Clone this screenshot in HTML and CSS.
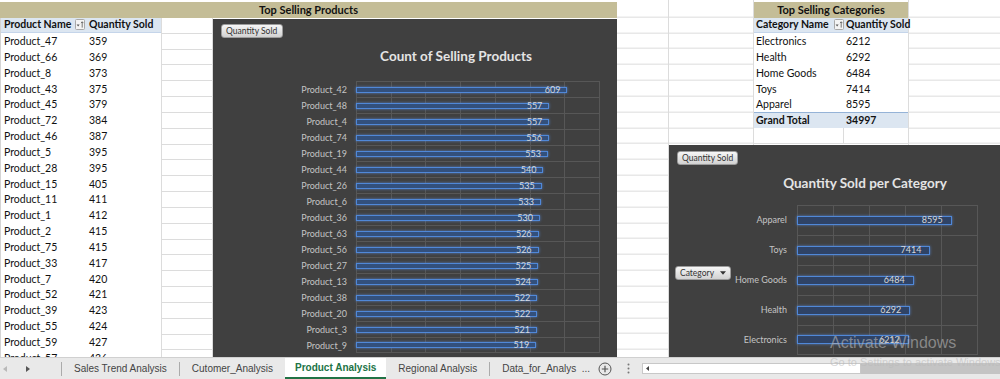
FILE: index.html
```html
<!DOCTYPE html>
<html lang="en">
<head>
<meta charset="utf-8">
<title>Product Analysis</title>
<link rel="stylesheet" href="styles.css">
</head>
<body>
<div class="sheet">
  <div class="group-left">
    <div class="band">Top Selling Products</div>
    <div class="left-body">
      <div class="pivot pivot-products">
        <div class="pv-row pv-head">
          <div class="c ca">Product Name
            <svg class="filter" viewBox="0 0 10 11" width="10" height="11"><rect x="0.5" y="0.5" width="9" height="10" rx="1" fill="#f4f4f4" stroke="#a9a9a9"/><path d="M1.6 5.6h3l-1.5 1.8z" fill="#555"/><path d="M7.2 8.6V2.8M6 4.1 7.2 2.8l1.2 1.3" stroke="#555" stroke-width="0.8" fill="none"/></svg>
          </div>
          <div class="c cb">Quantity Sold</div>
        </div>
        <div class="pv-row"><div class="c ca">Product_47</div><div class="c cb">359</div></div>
        <div class="pv-row"><div class="c ca">Product_66</div><div class="c cb">369</div></div>
        <div class="pv-row"><div class="c ca">Product_8</div><div class="c cb">373</div></div>
        <div class="pv-row"><div class="c ca">Product_43</div><div class="c cb">375</div></div>
        <div class="pv-row"><div class="c ca">Product_45</div><div class="c cb">379</div></div>
        <div class="pv-row"><div class="c ca">Product_72</div><div class="c cb">384</div></div>
        <div class="pv-row"><div class="c ca">Product_46</div><div class="c cb">387</div></div>
        <div class="pv-row"><div class="c ca">Product_5</div><div class="c cb">395</div></div>
        <div class="pv-row"><div class="c ca">Product_28</div><div class="c cb">395</div></div>
        <div class="pv-row"><div class="c ca">Product_15</div><div class="c cb">405</div></div>
        <div class="pv-row"><div class="c ca">Product_11</div><div class="c cb">411</div></div>
        <div class="pv-row"><div class="c ca">Product_1</div><div class="c cb">412</div></div>
        <div class="pv-row"><div class="c ca">Product_2</div><div class="c cb">415</div></div>
        <div class="pv-row"><div class="c ca">Product_75</div><div class="c cb">415</div></div>
        <div class="pv-row"><div class="c ca">Product_33</div><div class="c cb">417</div></div>
        <div class="pv-row"><div class="c ca">Product_7</div><div class="c cb">420</div></div>
        <div class="pv-row"><div class="c ca">Product_52</div><div class="c cb">421</div></div>
        <div class="pv-row"><div class="c ca">Product_39</div><div class="c cb">423</div></div>
        <div class="pv-row"><div class="c ca">Product_55</div><div class="c cb">424</div></div>
        <div class="pv-row"><div class="c ca">Product_59</div><div class="c cb">427</div></div>
        <div class="pv-row"><div class="c ca">Product_57</div><div class="c cb">436</div></div>
      </div>
      <div class="blank col-c"></div>
      <div class="chart chart-products">
        <div class="field-btn">Quantity Sold</div>
        <div class="chart-title">Count of Selling Products</div>
        <div class="plot">
          <div class="plot-label">Product_42</div><div class="track"><div class="bar" style="width:87.00%"><span>609</span></div></div>
          <div class="plot-label">Product_48</div><div class="track"><div class="bar" style="width:79.57%"><span>557</span></div></div>
          <div class="plot-label">Product_4</div><div class="track"><div class="bar" style="width:79.57%"><span>557</span></div></div>
          <div class="plot-label">Product_74</div><div class="track"><div class="bar" style="width:79.43%"><span>556</span></div></div>
          <div class="plot-label">Product_19</div><div class="track"><div class="bar" style="width:79.00%"><span>553</span></div></div>
          <div class="plot-label">Product_44</div><div class="track"><div class="bar" style="width:77.14%"><span>540</span></div></div>
          <div class="plot-label">Product_26</div><div class="track"><div class="bar" style="width:76.43%"><span>535</span></div></div>
          <div class="plot-label">Product_6</div><div class="track"><div class="bar" style="width:76.14%"><span>533</span></div></div>
          <div class="plot-label">Product_36</div><div class="track"><div class="bar" style="width:75.71%"><span>530</span></div></div>
          <div class="plot-label">Product_63</div><div class="track"><div class="bar" style="width:75.14%"><span>526</span></div></div>
          <div class="plot-label">Product_56</div><div class="track"><div class="bar" style="width:75.14%"><span>526</span></div></div>
          <div class="plot-label">Product_27</div><div class="track"><div class="bar" style="width:75.00%"><span>525</span></div></div>
          <div class="plot-label">Product_13</div><div class="track"><div class="bar" style="width:74.86%"><span>524</span></div></div>
          <div class="plot-label">Product_38</div><div class="track"><div class="bar" style="width:74.57%"><span>522</span></div></div>
          <div class="plot-label">Product_20</div><div class="track"><div class="bar" style="width:74.57%"><span>522</span></div></div>
          <div class="plot-label">Product_3</div><div class="track"><div class="bar" style="width:74.43%"><span>521</span></div></div>
          <div class="plot-label">Product_9</div><div class="track last"><div class="bar" style="width:74.14%"><span>519</span></div></div>
        </div>
      </div>
    </div>
  </div>

  <div class="blank col-e"></div>

  <div class="group-right">
    <div class="right-top">
      <div class="blank col-f"></div>
      <div class="pivot pivot-cats">
        <div class="band">Top Selling Categories</div>
        <div class="pv-row pv-head">
          <div class="c ca">Category Name
            <svg class="filter" viewBox="0 0 10 11" width="10" height="11"><rect x="0.5" y="0.5" width="9" height="10" rx="1" fill="#f4f4f4" stroke="#a9a9a9"/><path d="M1.6 5.6h3l-1.5 1.8z" fill="#555"/><path d="M7.2 8.6V2.8M6 4.1 7.2 2.8l1.2 1.3" stroke="#555" stroke-width="0.8" fill="none"/></svg>
          </div>
          <div class="c cb">Quantity Sold</div>
        </div>
        <div class="pv-row"><div class="c ca">Electronics</div><div class="c cb">6212</div></div>
        <div class="pv-row"><div class="c ca">Health</div><div class="c cb">6292</div></div>
        <div class="pv-row"><div class="c ca">Home Goods</div><div class="c cb">6484</div></div>
        <div class="pv-row"><div class="c ca">Toys</div><div class="c cb">7414</div></div>
        <div class="pv-row"><div class="c ca">Apparel</div><div class="c cb">8595</div></div>
        <div class="pv-row pv-total"><div class="c ca">Grand Total</div><div class="c cb">34997</div></div>
        <div class="pv-row pv-empty"><div class="c ca"></div><div class="c cb"></div></div>
      </div>
      <div class="blank col-i"></div>
    </div>
    <div class="chart chart-cats">
      <div class="field-btn">Quantity Sold</div>
      <div class="chart-title">Quantity Sold per Category</div>
      <div class="plot">
        <div class="plot-label">Apparel</div><div class="track"><div class="bar" style="width:85.95%"><span>8595</span></div></div>
        <div class="plot-label">Toys</div><div class="track"><div class="bar" style="width:74.14%"><span>7414</span></div></div>
        <div class="plot-label">Home Goods</div><div class="track"><div class="bar" style="width:64.84%"><span>6484</span></div></div>
        <div class="plot-label">Health</div><div class="track"><div class="bar" style="width:62.92%"><span>6292</span></div></div>
        <div class="plot-label">Electronics</div><div class="track last"><div class="bar" style="width:62.12%"><span>6212</span></div></div>
      </div>
      <div class="field-btn axis-btn">Category <svg viewBox="0 0 7 4" width="7" height="4"><path d="M0 0h7L3.5 4z" fill="#333"/></svg></div>
    </div>
  </div>
</div>

<div class="tabbar">
  <div class="nav">
    <svg class="nav-prev" viewBox="0 0 4 6" width="4" height="6"><path d="M4 0v6L0 3z" fill="#b9b9b9"/></svg>
    <svg class="nav-next" viewBox="0 0 4 6" width="4" height="6"><path d="M0 0v6l4-3z" fill="#555"/></svg>
  </div>
  <span class="sep"></span>
  <div class="tab">Sales Trend Analysis</div>
  <span class="sep"></span>
  <div class="tab">Cutomer_Analysis</div>
  <div class="tab active">Product Analysis</div>
  <div class="tab">Regional Analysis</div>
  <span class="sep"></span>
  <div class="tab tab-last">Data_for_Analys&nbsp; ...</div>
  <svg class="add" viewBox="0 0 14 14" width="14" height="14"><circle cx="7" cy="7" r="6" fill="none" stroke="#555" stroke-width="1"/><path d="M7 3.8v6.4M3.8 7h6.4" stroke="#555" stroke-width="1.2"/></svg>
  <svg class="more" viewBox="0 0 3 11" width="3" height="11"><circle cx="1.5" cy="1.5" r="1" fill="#777"/><circle cx="1.5" cy="5.5" r="1" fill="#777"/><circle cx="1.5" cy="9.5" r="1" fill="#777"/></svg>
  <div class="hscroll">
    <div class="hs-track"><svg viewBox="0 0 3 5" width="3" height="5"><path d="M3 0v5L0 2.5z" fill="#444"/></svg></div>
    <div class="hs-thumb"></div>
  </div>
</div>

<div class="watermark">
  <div class="wm-title">Activate Windows</div>
  <div class="wm-sub">Go to Settings to activate Windows.</div>
</div>
</body>
</html>
```

FILE: styles.css
```css
* { box-sizing: border-box; margin: 0; padding: 0; }

:root {
  --r: 15.83px;
  --r1: 17.5px;
  --grid: #dcdcdc;
  --chart-bg: #404040;
  --chart-grid: #575757;
  --tan: #c4bd97;
  --pv-blue: #dce6f1;
}

html, body {
  width: 1000px;
  height: 379px;
  overflow: hidden;
  background: #fff;
}

body {
  position: relative;
  font-family: "Lato", "Liberation Sans", sans-serif;
  font-size: 10.5px;
  color: #111;
}

/* ---------- worksheet ---------- */
.sheet {
  display: flex;
  height: 357px;
  overflow: hidden;
}

.group-left {
  width: 617px;
  display: flex;
  flex-direction: column;
}

.band {
  height: var(--r1);
  border-top: 2px solid #fff;
  background: var(--tan);
  font-size: 11px;
  font-weight: 700;
  text-align: center;
  line-height: 15px;
  white-space: nowrap;
}

.left-body {
  display: flex;
  flex: 1;
  min-height: 0;
}

.blank {
  background-image: repeating-linear-gradient(to bottom,
    transparent 0 calc(var(--r) - 1px),
    var(--grid) calc(var(--r) - 1px) var(--r));
}

.col-c {
  width: 52px;
  border-left: 1px solid var(--grid);
  border-right: 1px solid var(--grid);
}

.col-e {
  width: 52px;
  border-right: 1px solid var(--grid);
  background-position: 0 1.67px;
}

.group-right {
  flex: 1;
  display: flex;
  flex-direction: column;
  min-width: 0;
}

.right-top {
  display: flex;
  height: 145px;
}

.col-f {
  width: 85px;
  border-right: 1px solid var(--grid);
  background-position: 0 1.67px;
}

.col-i {
  flex: 1;
  background-position: 0 1.67px;
}

/* ---------- pivot tables ---------- */
.pivot-products {
  width: 161px;
  border-left: 1px solid #d4d4d4;
}

.pivot-cats {
  width: 155px;
  border-right: 1px solid var(--grid);
}

.pv-row {
  display: flex;
  height: var(--r);
  align-items: flex-end;
}

.pv-row .c {
  padding: 0 0 1px 3px;
  line-height: 13px;
  white-space: nowrap;
}

.pivot-products .ca { width: 84px; }
.pivot-products .cb { width: 76px; padding-left: 4px; }
.pivot-cats .ca { width: 90px; padding-left: 2px; }
.pivot-cats .cb { width: 64px; padding-left: 2px; }

.pv-head {
  background: var(--pv-blue);
  border-bottom: 1px solid #c5d5ea;
  font-weight: 700;
}

.pv-head .ca {
  display: flex;
  justify-content: space-between;
  align-items: center;
  padding-right: 0;
  height: 100%;
  padding-bottom: 0;
}

.filter { flex: none; }

.pv-total {
  background: var(--pv-blue);
  border-top: 1px solid #95b3d7;
  font-weight: 700;
}

.pv-empty {
  border-bottom: 1px solid var(--grid);
}

.pv-empty .ca {
  height: 100%;
  border-right: 1px solid var(--grid);
}

/* ---------- charts ---------- */
.chart {
  position: relative;
  display: flex;
  flex-direction: column;
  background: var(--chart-bg);
  color: #d6d6d6;
  overflow: hidden;
}

.chart-products {
  width: 404px;
  margin-top: 1.5px;
}

.chart-cats {
  height: 212px;
}

.field-btn {
  align-self: flex-start;
  height: 14px;
  padding: 0 4px;
  font-size: 8.5px;
  line-height: 12px;
  color: #333;
  white-space: nowrap;
  background: linear-gradient(#f6f6f6, #d2d2d2);
  border: 1px solid #9c9c9c;
  border-radius: 3px;
}

.chart-products .field-btn { margin: 5px 0 0 8px; width: 62px; }
.chart-cats .field-btn { margin: 6px 0 0 8px; width: 61px; }

.chart-cats .axis-btn {
  position: absolute;
  left: 6px;
  top: 121px;
  margin: 0;
  width: 56px;
  display: flex;
  align-items: center;
  gap: 6px;
}

.chart-title {
  height: 20px;
  line-height: 20px;
  font-weight: 700;
  font-size: 13.5px;
  color: #e4e4e4;
  text-align: center;
  white-space: nowrap;
}

.chart-products .chart-title { margin-top: 8px; padding-left: 82px; }
.chart-cats .chart-title { margin-top: 8.3px; padding-left: 61px; }

.plot {
  display: grid;
}

.chart-products .plot {
  grid-template-columns: 134px 244px;
  grid-auto-rows: 16px;
  column-gap: 9px;
  margin-top: 15.3px;
}

.chart-cats .plot {
  grid-template-columns: 118px 181px;
  grid-auto-rows: 30px;
  column-gap: 10px;
  margin-top: 11.7px;
}

.plot-label {
  font-size: 9px;
  color: #c4c4c4;
  white-space: nowrap;
  display: flex;
  align-items: center;
  justify-content: flex-end;
}

.track {
  display: flex;
  align-items: center;
  padding-right: 1px;
  border-top: 1px solid var(--chart-grid);
}

.chart-products .track {
  background: repeating-linear-gradient(to right, var(--chart-grid) 0 1px, transparent 1px 34.714px);
}

.chart-cats .track {
  background: repeating-linear-gradient(to right, var(--chart-grid) 0 1px, transparent 1px 36px);
}

.track.last { border-bottom: 1px solid var(--chart-grid); }

.bar {
  display: flex;
  justify-content: flex-end;
  align-items: center;
  background: #33507c;
  border: 1px solid #5088d8;
  box-shadow: 0 0 3px rgba(90, 140, 220, 0.8);
}

.chart-products .bar { height: 6px; }
.chart-cats .bar { height: 9px; background: #2f4366; }

.bar span {
  font-size: 9px;
  line-height: 6px;
  color: #d8d8d8;
  padding-right: 6px;
}

.chart-cats .bar span { padding-right: 8px; }

/* ---------- sheet tabs ---------- */
.tabbar {
  display: flex;
  align-items: center;
  height: 22px;
  background: #e9e9e9;
  border-top: 1px solid #d0d0d0;
  font-family: "Liberation Sans", Arial, sans-serif;
  font-size: 10px;
  color: #444;
}

.nav {
  width: 61px;
  height: 100%;
  display: flex;
  align-items: center;
  padding-left: 3px;
  gap: 19px;
}

.sep {
  width: 1px;
  height: 14px;
  background: #ababab;
}

.tab {
  height: 100%;
  display: flex;
  align-items: center;
  padding: 0 12px;
  white-space: nowrap;
}

.tab.active {
  padding: 0 10px;
  background: #fff;
  color: #217346;
  font-weight: 700;
  border-bottom: 2px solid #217346;
}

.tab.tab-last { padding-right: 8px; }

.more { margin-left: 15px; }

.hscroll {
  flex: 1;
  display: flex;
  align-items: center;
  margin-left: 12px;
  height: 11px;
}

.hs-track {
  width: 219px;
  height: 11px;
  background: #fff;
  border: 1px solid #c8c8c8;
  display: flex;
  align-items: center;
  padding-left: 3px;
}

.hs-thumb {
  flex: 1;
  height: 11px;
  background: #c4c4c4;
}

/* ---------- activation watermark ---------- */
.watermark {
  position: absolute;
  left: 830px;
  top: 333px;
  font-family: "Liberation Sans", Arial, sans-serif;
  color: rgba(185, 185, 185, 0.6);
  white-space: nowrap;
  pointer-events: none;
}

.wm-title { font-size: 16px; line-height: 20px; }
.wm-sub { font-size: 11px; line-height: 14px; margin-top: 2px; }
```
